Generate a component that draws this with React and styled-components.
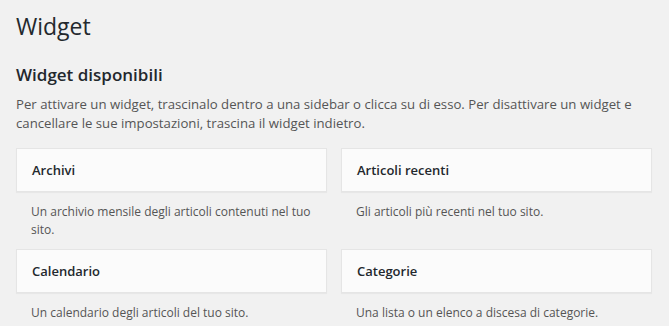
import React from "react"
import styled, { createGlobalStyle } from "styled-components"

const GlobalStyle = createGlobalStyle`
  html, body {
    margin: 0;
    padding: 0;
    background: #f1f1f1;
  }
  body {
    font-family: "Open Sans", "Liberation Sans", sans-serif;
    color: #444;
  }
`

const widgets = [
  { title: "Archivi", description: "Un archivio mensile degli articoli contenuti nel tuo sito." },
  { title: "Articoli recenti", description: "Gli articoli più recenti nel tuo sito." },
  { title: "Calendario", description: "Un calendario degli articoli del tuo sito." },
  { title: "Categorie", description: "Una lista o un elenco a discesa di categorie." },
]

function App() {
  return (
    <Wrapper>
      <GlobalStyle />
      <PageTitle>Widget</PageTitle>
      <SectionTitle>Widget disponibili</SectionTitle>
      <Intro>
        Per attivare un widget, trascinalo dentro a una sidebar o clicca su di esso. Per disattivare un widget e
        cancellare le sue impostazioni, trascina il widget indietro.
      </Intro>
      <WidgetGrid>
        {widgets.map((w) => (
          <WidgetItem key={w.title}>
            <WidgetCard>
              <WidgetTitle>{w.title}</WidgetTitle>
            </WidgetCard>
            <WidgetDescription>{w.description}</WidgetDescription>
          </WidgetItem>
        ))}
      </WidgetGrid>
    </Wrapper>
  )
}

const Wrapper = styled.div`
  padding: 12px 18px 0 16px;
`

const PageTitle = styled.h1`
  margin: 0;
  font-size: 23px;
  line-height: 29px;
  font-weight: 400;
  color: #23282d;
`

const SectionTitle = styled.h2`
  margin: 22px 0 0;
  font-size: 17px;
  line-height: 24px;
  font-weight: 600;
  color: #23282d;
`

const Intro = styled.p`
  margin: 8px 0 0;
  font-size: 13.2px;
  line-height: 19px;
  color: #555;
`

const WidgetGrid = styled.div`
  margin-top: 15px;
  display: grid;
  grid-template-columns: 311px 311px;
  column-gap: 14px;
`

const WidgetItem = styled.div`
  display: flex;
  flex-direction: column;
`

const WidgetCard = styled.div`
  background: #fbfbfb;
  border: 1px solid #e5e5e5;
  box-shadow: 0 1px 1px rgba(0, 0, 0, 0.04);
  padding: 12px 15px;
`

const WidgetTitle = styled.h3`
  margin: 0;
  font-size: 13px;
  line-height: 18px;
  font-weight: 600;
  color: #23282d;
`

const WidgetDescription = styled.p`
  margin: 0;
  padding: 11px 6px 10px 15px;
  min-height: 36px;
  font-size: 12px;
  line-height: 18px;
  color: #555;
`

export default App
